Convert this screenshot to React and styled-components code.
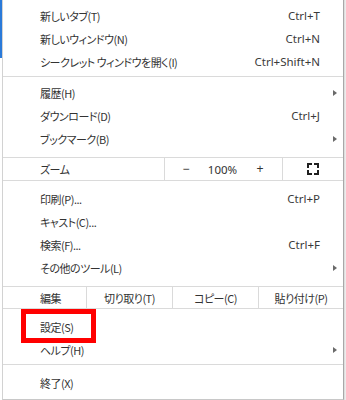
import styled, { createGlobalStyle } from "styled-components";

const GlobalStyle = createGlobalStyle`
  html, body {
    margin: 0;
    padding: 0;
    background: #ffffff;
  }
  body {
    font-family: "Noto Sans CJK JP", "Noto Sans", sans-serif;
    font-feature-settings: "palt";
    color: #333333;
    font-size: 12px;
  }
`;

const groups = {
  top: [
    { label: "新しいタブ(T)", shortcut: "Ctrl+T" },
    { label: "新しいウィンドウ(N)", shortcut: "Ctrl+N" },
    { label: "シークレット ウィンドウを開く(I)", shortcut: "Ctrl+Shift+N" },
  ],
  browse: [
    { label: "履歴(H)", sub: true },
    { label: "ダウンロード(D)", shortcut: "Ctrl+J" },
    { label: "ブックマーク(B)", sub: true },
  ],
  tools: [
    { label: "印刷(P)...", shortcut: "Ctrl+P" },
    { label: "キャスト(C)..." },
    { label: "検索(F)...", shortcut: "Ctrl+F" },
    { label: "その他のツール(L)", sub: true },
  ],
  settings: [{ label: "設定(S)" }, { label: "ヘルプ(H)", sub: true }],
  exit: [{ label: "終了(X)" }],
};

const MenuItem = ({ label, shortcut, sub }) => (
  <Item>
    <Label>{label}</Label>
    <Shortcut>{shortcut}</Shortcut>
    <ArrowCell>{sub && <Arrow />}</ArrowCell>
  </Item>
);

const FullscreenIcon = () => (
  <svg width="12" height="12" viewBox="0 0 12 12" fill="none" stroke="#202020" strokeWidth="2">
    <path d="M1 5V1h4M7 1h4v4M11 7v4H7M5 11H1V7" />
  </svg>
);

const App = () => {
  return (
    <>
      <GlobalStyle />
      <Page>
        <Edge />
        <Menu>
          <Group $top={4}>
            {groups.top.map((i) => (
              <MenuItem key={i.label} {...i} />
            ))}
          </Group>
          <Separator $before={3} $after={4} />
          <Group>
            {groups.browse.map((i) => (
              <MenuItem key={i.label} {...i} />
            ))}
          </Group>
          <Separator $before={7} />
          <ZoomRow>
            <RowLabel $width={161}>ズーム</RowLabel>
            <ZoomControls>
              <ZoomButton $width={42}>−</ZoomButton>
              <ZoomValue>100%</ZoomValue>
              <ZoomButton $width={44}>+</ZoomButton>
            </ZoomControls>
            <FullscreenCell>
              <FullscreenIcon />
            </FullscreenCell>
          </ZoomRow>
          <Group $top={6}>
            {groups.tools.map((i) => (
              <MenuItem key={i.label} {...i} />
            ))}
          </Group>
          <Separator $before={7} />
          <EditRow>
            <RowLabel $width={83}>編集</RowLabel>
            <EditButton>切り取り(T)</EditButton>
            <EditButton>コピー(C)</EditButton>
            <EditButton>貼り付け(P)</EditButton>
          </EditRow>
          <Group $top={6}>
            {groups.settings.map((i) => (
              <MenuItem key={i.label} {...i} />
            ))}
          </Group>
          <Separator $before={3} $after={6} />
          <Group $bottom={5}>
            {groups.exit.map((i) => (
              <MenuItem key={i.label} {...i} />
            ))}
          </Group>
        </Menu>
        <Shade />
        <Highlight />
      </Page>
    </>
  );
};

const Page = styled.div`
  position: relative;
  display: flex;
  width: 346px;
  height: 400px;
  overflow: hidden;
`;

const Edge = styled.div`
  width: 2px;
  flex-shrink: 0;
  background: linear-gradient(#2a7ad9 0 58px, #ffffff 58px);
`;

const Shade = styled.div`
  width: 2px;
  flex-shrink: 0;
  background: linear-gradient(to right, #d8d8d8, #f2f2f2);
`;

const Menu = styled.div`
  flex: 1;
  min-width: 0;
  display: flex;
  flex-direction: column;
  border-left: 1px solid #d2d2d2;
  border-right: 1px solid #a8a8a8;
  border-bottom: 1px solid #c8c8c8;
`;

const Group = styled.div`
  display: flex;
  flex-direction: column;
  padding-top: ${(p) => p.$top || 0}px;
  padding-bottom: ${(p) => p.$bottom || 0}px;
`;

const Separator = styled.div`
  height: 1px;
  background: #dadada;
  margin-top: ${(p) => p.$before || 0}px;
  margin-bottom: ${(p) => p.$after || 0}px;
`;

const Item = styled.div`
  display: grid;
  grid-template-columns: 1fr auto 23px;
  align-items: center;
  height: 23px;
  padding-left: 37px;
`;

const JaText = styled.span`
  font-size: 11px;
  letter-spacing: -0.5px;
  white-space: nowrap;
`;

const Label = styled(JaText)``;

const Shortcut = styled.span`
  font-family: "Noto Sans", sans-serif;
  font-size: 11.5px;
  color: #3a3a3a;
  white-space: nowrap;
`;

const ArrowCell = styled.span`
  display: flex;
  align-items: center;
  padding-left: 13px;
`;

const Arrow = styled.span`
  width: 0;
  height: 0;
  border-top: 3.5px solid transparent;
  border-bottom: 3.5px solid transparent;
  border-left: 4px solid #6a6a6a;
`;

const ZoomRow = styled.div`
  display: flex;
  height: 22px;
  border-bottom: 1px solid #dadada;
`;

const RowLabel = styled(JaText)`
  display: flex;
  align-items: center;
  flex: 0 0 ${(p) => p.$width}px;
  box-sizing: border-box;
  padding-left: 37px;
`;

const ZoomControls = styled.div`
  display: flex;
  align-items: center;
  flex: 0 0 119px;
  box-sizing: border-box;
  border-left: 1px solid #dadada;
  border-right: 1px solid #dadada;
`;

const ZoomButton = styled.span`
  flex: 0 0 ${(p) => p.$width}px;
  text-align: center;
  font-family: "Liberation Sans", sans-serif;
  font-size: 12px;
`;

const ZoomValue = styled.span`
  flex: 0 0 31px;
  text-align: center;
  font-family: "Noto Sans", sans-serif;
  font-size: 11.5px;
  color: #333;
`;

const FullscreenCell = styled.div`
  flex: 1;
  display: flex;
  align-items: center;
  justify-content: center;
`;

const EditRow = styled.div`
  display: flex;
  height: 21px;
  border-bottom: 1px solid #dadada;
`;

const EditButton = styled(JaText)`
  flex: 0 0 86px;
  box-sizing: border-box;
  display: flex;
  align-items: center;
  justify-content: center;
  border-left: 1px solid #dadada;

  &:last-child {
    flex: 1;
  }
`;

const Highlight = styled.div`
  position: absolute;
  left: 21px;
  top: 309px;
  width: 75px;
  height: 34px;
  box-sizing: border-box;
  border: 5px solid #ff0000;
`;

export default App;
